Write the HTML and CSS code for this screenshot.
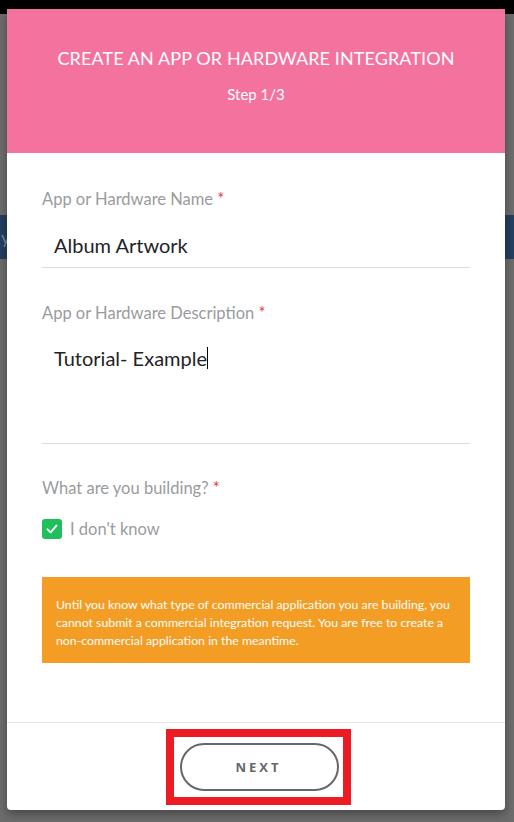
FILE: index.html
```html
<!DOCTYPE html>
<html lang="en">
<head>
<meta charset="utf-8">
<title>Create an app</title>
<link rel="stylesheet" href="styles.css">
</head>
<body>
<div class="topbar"></div>
<div class="bg-spacer"></div>
<div class="bluebar"><span class="bluebar-text">y</span></div>

<div class="modal">
  <header class="modal-header">
    <h1 class="modal-title">CREATE AN APP OR HARDWARE INTEGRATION</h1>
    <p class="modal-step">Step 1/3</p>
  </header>
  <div class="modal-body">
    <label class="field-label">App or Hardware Name <span class="req">*</span></label>
    <div class="input">Album Artwork</div>

    <label class="field-label gap">App or Hardware Description <span class="req">*</span></label>
    <div class="textarea">Tutorial- Example<span class="caret"></span></div>

    <label class="field-label gap2">What are you building? <span class="req">*</span></label>
    <div class="check-row">
      <span class="checkbox">
        <svg width="14" height="14" viewBox="0 0 14 14"><path d="M2.5 7.4 L5.6 10.4 L11.5 3.6" fill="none" stroke="#fff" stroke-width="2" stroke-linecap="round" stroke-linejoin="round"/></svg>
      </span>
      <span class="check-label">I don't know</span>
    </div>

    <div class="notice">Until you know what type of commercial application you are building, you cannot submit a commercial integration request. You are free to create a non-commercial application in the meantime.</div>
  </div>
  <footer class="modal-footer">
    <div class="btn-wrap">
      <button class="btn-next">NEXT</button>
      <span class="highlight"></span>
    </div>
  </footer>
</div>
</body>
</html>
```
FILE: styles.css
```css
* { box-sizing: border-box; }
html, body { margin: 0; padding: 0; }
body {
  width: 514px;
  height: 822px;
  background: #6c6c6c;
  font-family: "Lato", "Liberation Sans", sans-serif;
  position: relative;
  overflow: hidden;
}
.topbar { height: 14px; background: #000; }
.bg-spacer { height: 201px; }
.bluebar {
  height: 44px;
  background: #243f60;
  color: #7a8597;
  font-size: 18px;
  line-height: 44px;
  padding-left: 1px;
}
.modal {
  position: absolute;
  left: 7px;
  top: 9px;
  width: 498px;
  height: 801px;
  background: #fff;
  border-radius: 0 0 4px 4px;
  box-shadow: 0 4px 10px rgba(0,0,0,0.35);
  display: flex;
  flex-direction: column;
}
.modal-header {
  height: 144px;
  background: #f4739e;
  color: #fff;
  text-align: center;
  padding-top: 38px;
}
.modal-title {
  margin: 0;
  font-size: 18px;
  font-weight: 400;
  line-height: 22px;
  letter-spacing: 0.1px;
}
.modal-step {
  margin: 14px 0 0;
  font-size: 15px;
  line-height: 22px;
}
.modal-body {
  flex: 1;
  padding: 36px 35px 0;
  display: flex;
  flex-direction: column;
}
.field-label {
  display: block;
  font-size: 16.5px;
  line-height: 20px;
  color: #9a9ba0;
}
.field-label.gap { margin-top: 35px; }
.field-label.gap2 { margin-top: 34px; }
.req { color: #e0414a; }
.input {
  margin-top: 14px;
  height: 45px;
  line-height: 44px;
  padding-left: 12px;
  font-size: 20px;
  color: #1f2328;
  border-bottom: 1px solid #dcdcdc;
}
.textarea {
  height: 121px;
  padding: 24px 0 0 12px;
  font-size: 20px;
  line-height: 22px;
  color: #1f2328;
  border-bottom: 1px solid #dcdcdc;
}
.caret {
  display: inline-block;
  width: 1px;
  height: 22px;
  background: #000;
  vertical-align: top;
}
.check-row {
  margin-top: 21px;
  display: flex;
  align-items: center;
  gap: 8px;
  height: 20px;
}
.checkbox {
  width: 20px;
  height: 20px;
  border-radius: 3px;
  background: #1fbf5a;
  display: flex;
  align-items: center;
  justify-content: center;
}
.check-label {
  font-size: 16.5px;
  color: #9a9ba0;
}
.notice {
  margin-top: 38px;
  background: #f49d25;
  color: #fff;
  font-size: 12.3px;
  line-height: 18px;
  padding: 19px 14px 13px;
}
.modal-footer {
  height: 88px;
  border-top: 1px solid #e6e6e6;
  display: flex;
  justify-content: center;
  padding-top: 20px;
}
.btn-wrap { position: relative; margin-left: 6px; }
.btn-next {
  width: 159px;
  height: 48px;
  border: 2px solid #65676c;
  border-radius: 24px;
  background: #fff;
  color: #65676c;
  font-family: "Open Sans", "Liberation Sans", sans-serif;
  font-weight: 700;
  font-size: 13px;
  letter-spacing: 3px;
  padding-left: 5px;
}
.highlight {
  position: absolute;
  left: -14px;
  top: -14px;
  width: 185px;
  height: 76px;
  border: 8px solid #ed1c24;
}
```
